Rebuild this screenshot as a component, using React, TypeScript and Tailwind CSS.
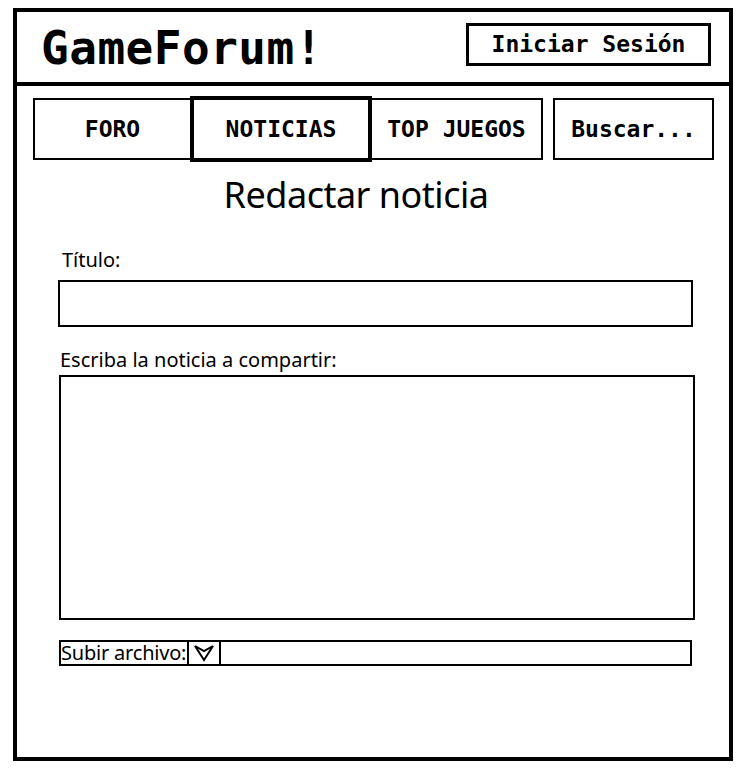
import React from "react";

const mono = "font-['DejaVu_Sans_Mono',monospace] font-bold";
const sans = "font-['Noto_Sans',sans-serif]";

function NavItem({ label, active, className }: { label: string; active?: boolean; className: string }) {
  return (
    <div
      className={`flex items-center justify-center border-black bg-white text-black text-[23px] ${mono} ${
        active ? "border-4 h-[66px] z-10" : "border-2 h-[62px]"
      } ${className}`}
    >
      {label}
    </div>
  );
}

function DownIcon() {
  return (
    <svg width="22" height="18" viewBox="0 0 22 18" fill="none">
      <path d="M2 2 L11 16 L20 2 L11 7 Z" stroke="black" strokeWidth="2" strokeLinejoin="miter" />
    </svg>
  );
}

export default function App() {
  return (
    <div className="min-h-[780px] bg-white pt-[8px] pl-[13px]">
      <div className="w-[720px] h-[753px] border-4 border-black flex flex-col">
        {/* header */}
        <div className="h-[74px] border-b-4 border-black flex items-start justify-between pl-[24px] pr-[18px]">
          <div className={`text-[46px] leading-[72px] tracking-[0.5px] text-black ${mono}`}>GameForum!</div>
          <button className={`mt-[11px] w-[245px] h-[43px] border-[3px] border-black text-[23px] text-black ${mono}`}>
            Iniciar Sesión
          </button>
        </div>

        {/* nav */}
        <div className="flex items-center pl-[16px] pt-[10px] h-[76px]">
          <NavItem label="FORO" className="w-[159px]" />
          <NavItem label="NOTICIAS" active className="w-[182px] -ml-[2px]" />
          <NavItem label="TOP JUEGOS" className="w-[173px] -ml-[2px]" />
          <NavItem label="Buscar..." className="w-[161px] ml-[10px]" />
        </div>

        {/* form */}
        <div className={`text-black ${sans}`}>
          <h1 className="w-[678px] mt-[15px] text-center text-[36px] leading-[36px] tracking-[-0.5px]">
            Redactar noticia
          </h1>

          <label className="block ml-[45px] mt-[37px] text-[20px] leading-[20px]">Título:</label>
          <input className="block ml-[41px] mt-[10px] w-[635px] h-[47px] border-2 border-black outline-none" />

          <label className="block ml-[43px] mt-[23px] text-[20px] leading-[20px]">Escriba la noticia a compartir:</label>
          <textarea className="block ml-[42px] mt-[5px] w-[636px] h-[245px] border-2 border-black resize-none outline-none" />

          <div className="flex ml-[42px] mt-[20px] w-[633px] h-[26px] border-2 border-black">
            <span className="text-[20px] leading-[22px] tracking-[-0.2px] whitespace-nowrap">Subir archivo:</span>
            <div className="w-[34px] border-x-2 border-black flex items-center justify-center ml-[1px]">
              <DownIcon />
            </div>
            <div className="flex-1" />
          </div>
        </div>
      </div>
    </div>
  );
}
